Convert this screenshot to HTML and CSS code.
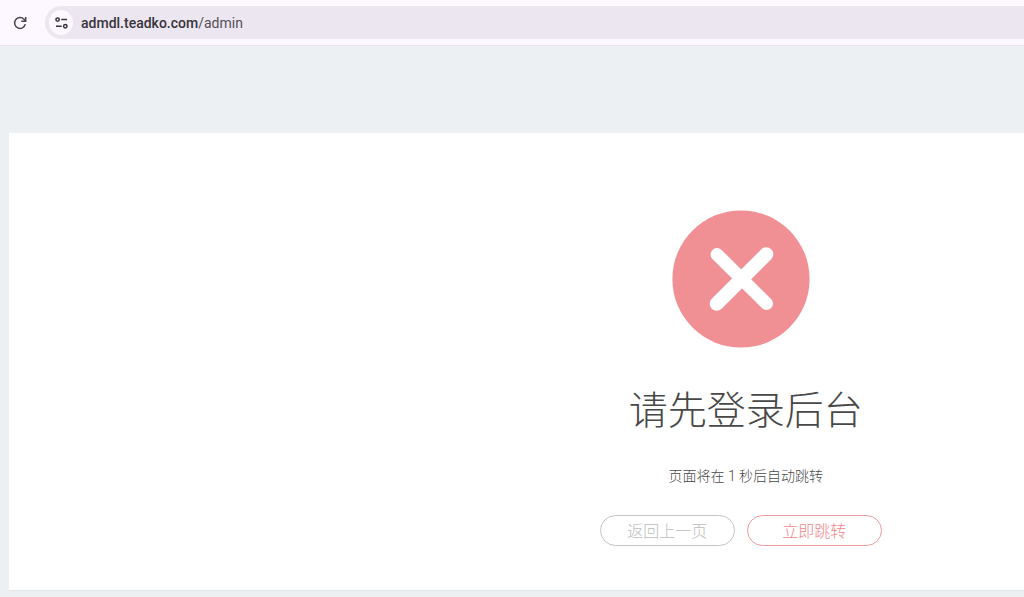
FILE: index.html
```
<!DOCTYPE html>
<html lang="zh-CN">
<head>
    <meta charset="utf-8">
    <title>请先登录后台</title>
    <meta name="viewport" content="width=device-width, initial-scale=1">
    <link rel="stylesheet" href="styles.css">
</head>
<body>
    <header class="toolbar">
        <button type="button" class="reload-btn" aria-label="重新加载">
            <svg width="14" height="14" viewBox="0 0 14 14" fill="none" stroke="currentColor" stroke-width="1.5">
                <path d="M12.3 8.2A5.4 5.4 0 1 1 11 3.3L12.4 5"/>
                <path d="M12.7 1V5.3H8.3"/>
            </svg>
        </button>
        <div class="address-bar">
            <button type="button" class="site-btn" aria-label="网站信息">
                <svg width="13" height="12" viewBox="0 0 13 12" fill="none" stroke="currentColor" stroke-width="1.5">
                    <circle cx="2.6" cy="2.6" r="1.7"/>
                    <path d="M6.3 2.6H12M1 9.2H6.7"/>
                    <circle cx="10.3" cy="9.2" r="1.7"/>
                </svg>
            </button>
            <a class="url" href="#">admdl.teadko.com<span class="url-path">/admin</span></a>
        </div>
    </header>

    <main class="page">
        <section class="card">
            <div class="message">
                <svg class="status-icon" width="138" height="138" viewBox="0 0 138 138">
                    <circle cx="69" cy="69" r="68.6" fill="#f08f94"/>
                    <path d="M45 44.5L94.5 93.5" stroke="#fff" stroke-width="13" stroke-linecap="round"/>
                    <path d="M44.7 93.8L94.3 44.2" stroke="#fff" stroke-width="14" stroke-linecap="round"/>
                </svg>
                <h1 class="title">请先登录后台</h1>
                <p class="hint">页面将在 1 秒后自动跳转</p>
                <div class="actions">
                    <button type="button" class="btn">返回上一页</button>
                    <button type="button" class="btn btn-primary">立即跳转</button>
                </div>
            </div>
        </section>
    </main>
</body>
</html>
```
FILE: styles.css
```
* {
    margin: 0;
    padding: 0;
    box-sizing: border-box;
}

body {
    font-family: "Noto Sans CJK SC", sans-serif;
    font-weight: 300;
    background: #ecf0f3;
    color: #484848;
    min-height: 100vh;
    overflow-x: hidden;
}

button {
    font: inherit;
    background: none;
    border: none;
    cursor: pointer;
}

.toolbar {
    display: flex;
    align-items: center;
    gap: 18px;
    padding: 6px 0 6px 13px;
    background: #fdf7ff;
    border-bottom: 1px solid #ebe4ec;
}

.reload-btn {
    display: flex;
    color: #48434f;
}

.address-bar {
    flex: 1;
    display: flex;
    align-items: center;
    gap: 8px;
    padding: 4px;
    border-radius: 17px 0 0 17px;
    background: #ece6f0;
}

.site-btn {
    display: flex;
    align-items: center;
    justify-content: center;
    width: 24px;
    height: 25px;
    border-radius: 50%;
    background: #fdf7ff;
    color: #38343c;
}

.url {
    font-family: Roboto, sans-serif;
    font-size: 14px;
    font-weight: 500;
    line-height: 20px;
    color: #38343c;
    text-decoration: none;
}

.url-path {
    font-weight: 400;
    color: #55505a;
}

.page {
    padding: 87px 0 6px 9px;
}

.card {
    padding: 77px 0 44px calc(44% + 2px);
    background: #fff;
    border-bottom: 1px solid #e4e7ea;
}

.message {
    display: flex;
    flex-direction: column;
    align-items: center;
}

.status-icon {
    display: block;
}

.title {
    margin-top: 29px;
    padding-left: 10px;
    font-size: 39px;
    font-weight: 300;
    line-height: 60px;
}

.hint {
    margin-top: 29px;
    padding-left: 10px;
    font-family: Roboto, "Noto Sans CJK SC", sans-serif;
    font-size: 14px;
    line-height: 20px;
}

.actions {
    display: flex;
    gap: 12px;
    margin-top: 29px;
}

.btn {
    width: 135px;
    height: 31px;
    border: 1px solid #c4c4c4;
    border-radius: 16px;
    font-size: 16px;
    line-height: 29px;
    color: #bcbcbc;
}

.btn-primary {
    border-color: #f29a9f;
    color: #f08489;
}
```
